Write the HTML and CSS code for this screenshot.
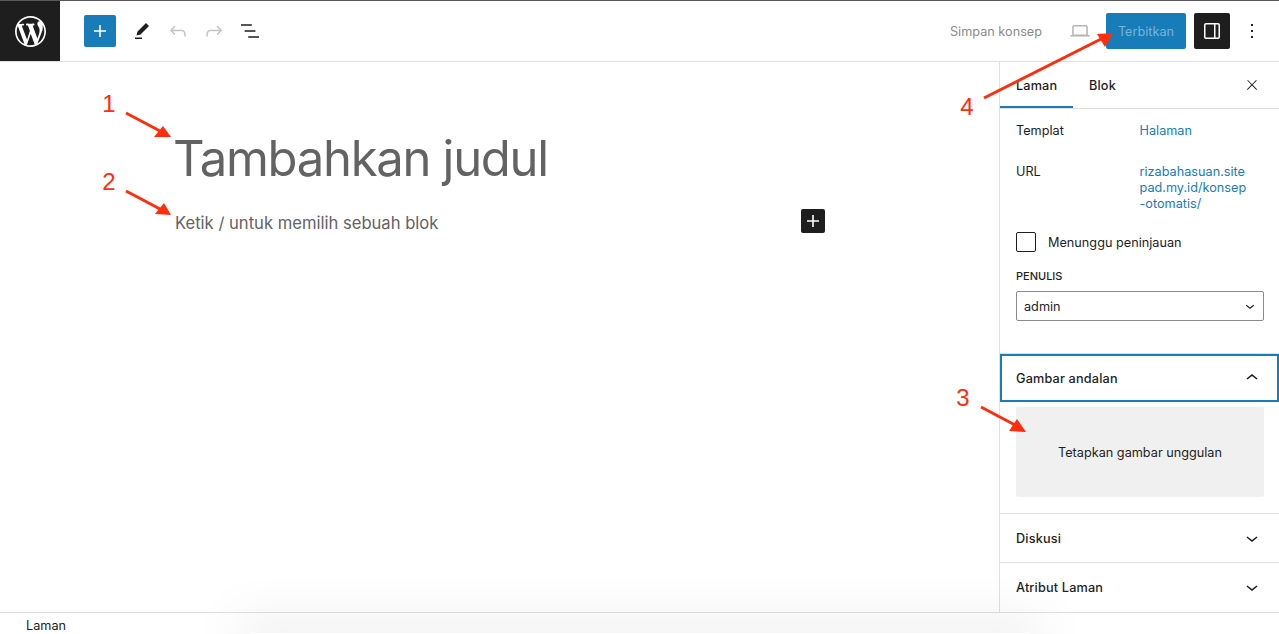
FILE: index.html
```html
<!DOCTYPE html>
<html lang="id">
<head>
    <meta charset="UTF-8">
    <meta name="viewport" content="width=device-width, initial-scale=1.0">
    <title>Tambahkan judul - Editor</title>
    <link rel="stylesheet" href="styles.css">
</head>
<body>
    <div class="wrapper">
        <header class="topbar">
            <a class="logo" href="#">
                <svg viewBox="0 0 20 20" width="31" height="31" fill="#fff"><path d="M20 10c0-5.51-4.49-10-10-10C4.48 0 0 4.49 0 10c0 5.52 4.48 10 10 10 5.51 0 10-4.48 10-10zM7.78 15.37L4.37 6.22c.55-.02 1.17-.08 1.17-.08.5-.06.44-1.13-.06-1.11 0 0-1.45.11-2.37.11-.18 0-.37 0-.58-.01C4.12 2.69 6.87 1.11 10 1.11c2.33 0 4.45.87 6.05 2.34-.68-.11-1.65.39-1.65 1.58 0 .74.45 1.36.9 2.1.35.61.55 1.36.55 2.46 0 1.49-1.4 5-1.4 5l-3.03-8.37c.54-.02.82-.17.82-.17.5-.05.44-1.25-.06-1.22 0 0-1.44.12-2.38.12-.87 0-2.33-.12-2.33-.12-.5-.03-.56 1.2-.06 1.22l.92.08 1.26 3.41zM17.41 10c.24-.64.74-1.87.43-4.25.7 1.29 1.05 2.71 1.05 4.25 0 3.29-1.73 6.24-4.4 7.78.97-2.59 1.94-5.2 2.92-7.78zM6.1 18.09C3.12 16.65 1.11 13.53 1.11 10c0-1.3.23-2.48.72-3.59C3.25 10.3 4.67 14.2 6.1 18.09zm4.03-6.63l2.58 6.98c-.86.29-1.76.45-2.71.45-.79 0-1.57-.11-2.29-.33.81-2.38 1.62-4.74 2.42-7.1z"/></svg>
            </a>
            <div class="tools">
                <button class="inserter">
                    <svg viewBox="0 0 24 24" width="24" height="24" fill="#fff"><path d="M18 11.2h-5.2V6h-1.6v5.2H6v1.6h5.2V18h1.6v-5.2H18z"/></svg>
                </button>
                <button class="tool">
                    <svg viewBox="0 0 24 24" width="24" height="24" fill="#1e1e1e"><path d="m19 7-3-3-8.5 8.5-1 4 4-1L19 7Zm-7 11.5H5V20h7v-1.5Z"/></svg>
                </button>
                <button class="tool">
                    <svg viewBox="0 0 24 24" width="24" height="24" fill="#c4c4c4"><path d="M18.3 11.7c-.6-.6-1.4-.9-2.3-.9H6.7l2.9-3.3-1.1-1-4.5 5L8.5 16l1-1-2.7-2.7H16c.5 0 .9.2 1.3.5 1 1 1 3.4 1 4.5v.3h1.5v-.2c0-1.5 0-4.3-1.5-5.7z"/></svg>
                </button>
                <button class="tool">
                    <svg viewBox="0 0 24 24" width="24" height="24" fill="#c4c4c4"><path d="M15.6 6.5l-1.1 1 2.9 3.3H8c-.9 0-1.7.3-2.3.9-1.4 1.5-1.4 4.2-1.4 5.6v.2h1.5v-.3c0-1.1 0-3.5 1-4.5.3-.3.7-.5 1.3-.5h9.2L14.5 15l1.1 1.1 4.6-4.6-4.6-5z"/></svg>
                </button>
                <button class="tool">
                    <svg viewBox="0 0 24 24" width="24" height="24" fill="#1e1e1e"><path d="M13.8 5.2H3v1.5h10.8V5.2zm-3.6 12v1.5H21v-1.5H10.2zm7.2-6H6.6v1.5h10.8v-1.5z"/></svg>
                </button>
            </div>
            <div class="actions">
                <span class="save-draft">Simpan konsep</span>
                <button class="tool preview">
                    <svg viewBox="0 0 24 24" width="24" height="24" fill="#b5b5b5"><path d="M20.5 16h-.7V8c0-1.1-.9-2-2-2H6.2c-1.1 0-2 .9-2 2v8h-.7c-.8 0-1.5.7-1.5 1.5h20c0-.8-.7-1.5-1.5-1.5zM5.7 8c0-.3.2-.5.5-.5h11.6c.3 0 .5.2.5.5v7.6H5.7V8z"/></svg>
                </button>
                <button class="publish">Terbitkan</button>
                <button class="settings">
                    <svg viewBox="0 0 24 24" width="24" height="24" fill="#fff"><path d="M18 4H6c-1.1 0-2 .9-2 2v12c0 1.1.9 2 2 2h12c1.1 0 2-.9 2-2V6c0-1.1-.9-2-2-2zm-4 14.5H6c-.3 0-.5-.2-.5-.5V6c0-.3.2-.5.5-.5h8v13zm4.5-.5c0 .3-.2.5-.5.5h-2.5v-13H18c.3 0 .5.2.5.5v12z"/></svg>
                </button>
                <button class="tool more">
                    <svg viewBox="0 0 24 24" width="24" height="24" fill="#1e1e1e"><path d="M13 19h-2v-2h2v2zm0-6h-2v-2h2v2zm0-6h-2V5h2v2z"/></svg>
                </button>
            </div>
        </header>

        <div class="body-row">
            <main class="editor">
                <h1 class="post-title">Tambahkan judul</h1>
                <div class="block-row">
                    <p class="placeholder">Ketik / untuk memilih sebuah blok</p>
                    <button class="appender">
                        <svg viewBox="0 0 24 24" width="24" height="24" fill="#fff"><path d="M18 11.2h-5.2V6h-1.6v5.2H6v1.6h5.2V18h1.6v-5.2H18z"/></svg>
                    </button>
                </div>
            </main>

            <aside class="sidebar">
                <div class="tabs">
                    <span class="tab active">Laman</span>
                    <span class="tab">Blok</span>
                    <button class="close">
                        <svg viewBox="0 0 24 24" width="16" height="16" fill="#1e1e1e"><path d="M13 11.8l6.1-6.3-1-1-6.1 6.2-6.1-6.3-1 1 6.1 6.3-6.5 6.7 1 1 6.5-6.6 6.5 6.6 1-1z"/></svg>
                    </button>
                </div>

                <section class="summary">
                    <div class="summary-row">
                        <span class="summary-label">Templat</span>
                        <a class="summary-link" href="#">Halaman</a>
                    </div>
                    <div class="summary-row url-row">
                        <span class="summary-label">URL</span>
                        <a class="summary-link" href="#">rizabahasuan.site<br>pad.my.id/konsep<br>-otomatis/</a>
                    </div>
                    <label class="check-row">
                        <span class="checkbox"></span>
                        <span>Menunggu peninjauan</span>
                    </label>
                    <div class="author-label">Penulis</div>
                    <div class="author-select">
                        <span>admin</span>
                        <svg viewBox="0 0 24 24" width="18" height="18" fill="#1e1e1e"><path d="M17.5 11.6L12 16l-5.5-4.4.9-1.2L12 14l4.5-3.6 1 1.2z"/></svg>
                    </div>
                </section>

                <section class="panel open">
                    <div class="panel-head focused">
                        <span>Gambar andalan</span>
                        <svg viewBox="0 0 24 24" width="24" height="24" fill="#1e1e1e"><path d="M6.5 12.4L12 8l5.5 4.4-.9 1.2L12 10l-4.5 3.6-1-1.2z"/></svg>
                    </div>
                    <div class="panel-body">
                        <button class="featured">Tetapkan gambar unggulan</button>
                    </div>
                </section>
                <section class="panel">
                    <div class="panel-head">
                        <span>Diskusi</span>
                        <svg viewBox="0 0 24 24" width="24" height="24" fill="#1e1e1e"><path d="M17.5 11.6L12 16l-5.5-4.4.9-1.2L12 14l4.5-3.6 1 1.2z"/></svg>
                    </div>
                </section>
                <section class="panel">
                    <div class="panel-head">
                        <span>Atribut Laman</span>
                        <svg viewBox="0 0 24 24" width="24" height="24" fill="#1e1e1e"><path d="M17.5 11.6L12 16l-5.5-4.4.9-1.2L12 14l4.5-3.6 1 1.2z"/></svg>
                    </div>
                </section>
            </aside>
        </div>

        <footer class="statusbar">Laman</footer>
    </div>

    <div class="bottom-shadow"></div>

    <!-- red notes drawn over the screenshot -->
    <svg class="notes" viewBox="0 0 1279 634" width="1279" height="634">
        <g class="note-lines">
            <line x1="126" y1="113" x2="160" y2="131"/>
            <line x1="126" y1="191" x2="160" y2="209"/>
            <line x1="981" y1="407" x2="1015" y2="425"/>
            <line x1="984" y1="98" x2="1103" y2="38"/>
        </g>
        <g class="note-heads">
            <polygon points="171,137 154,137 163,126"/>
            <polygon points="171,215 155,214 164,203"/>
            <polygon points="1026,432 1009,431 1017,419"/>
            <polygon points="1113,33 1097,34 1105,47"/>
        </g>
        <g class="note-text">
            <text x="109" y="112">1</text>
            <text x="109" y="190">2</text>
            <text x="963" y="406">3</text>
            <text x="967" y="115">4</text>
        </g>
    </svg>
</body>
</html>
```

FILE: styles.css
```css
body, html {
    margin: 0;
    padding: 0;
    height: 100%;
    font-family: Inter, "Noto Sans", sans-serif;
    font-size: 12.7px;
    color: #1e1e1e;
    background: #fff;
    overflow: hidden;
}
button {
    font-family: inherit;
    border: none;
    background: none;
    padding: 0;
    display: flex;
    align-items: center;
    justify-content: center;
}
.wrapper {
    display: flex;
    flex-direction: column;
    height: 100vh;
}

/* top bar */
.topbar {
    display: flex;
    align-items: center;
    flex: none;
    height: 60px;
    border-top: 1px solid #5a5a5a;
    border-bottom: 1px solid #e0e0e0;
}
.logo {
    width: 60px;
    height: 60px;
    background: #1e1e1e;
    display: flex;
    align-items: center;
    justify-content: center;
}
.tools {
    display: flex;
    align-items: center;
    margin-left: 24px;
}
.inserter {
    width: 32px;
    height: 32px;
    background: #187cb9;
    border-radius: 2px;
    margin-right: 8px;
}
.tool {
    width: 36px;
    height: 36px;
}
.actions {
    display: flex;
    align-items: center;
    margin-left: auto;
    padding-right: 9px;
}
.save-draft {
    color: #8b8b8b;
    margin-right: 20px;
}
.publish {
    width: 80px;
    height: 36px;
    margin-left: 8px;
    background: #187cb9;
    color: #79b3d8;
    font-size: 12.7px;
    border-radius: 2px;
}
.settings {
    width: 36px;
    height: 36px;
    margin-left: 8px;
    background: #1e1e1e;
    border-radius: 2px;
}
.more {
    margin-left: 4px;
}

/* editor */
.body-row {
    flex: 1;
    display: flex;
    min-height: 0;
}
.editor {
    flex: 1;
    padding: 63px 0 0 175px;
    color: #636363;
}
.post-title {
    margin: 0 0 0 -2px;
    font-size: 49px;
    font-weight: 400;
    line-height: 68px;
    letter-spacing: -1.3px;
    color: #636363;
}
.block-row {
    display: flex;
    align-items: center;
    justify-content: space-between;
    width: 650px;
    margin-top: 14px;
}
.placeholder {
    margin: 0;
    padding-top: 4px;
    font-size: 16.6px;
    line-height: 24px;
}
.appender {
    width: 24px;
    height: 24px;
    background: #1e1e1e;
    border-radius: 2px;
}

/* sidebar */
.sidebar {
    width: 279px;
    flex: none;
    border-left: 1px solid #e0e0e0;
    overflow: hidden;
}
.tabs {
    display: flex;
    align-items: stretch;
    height: 46px;
    border-bottom: 1px solid #e0e0e0;
}
.tab {
    display: flex;
    align-items: center;
    padding: 0 16px;
    font-weight: 500;
    letter-spacing: 0.15px;
    box-sizing: border-box;
}
.tab.active {
    width: 73px;
    box-shadow: inset 0 -2px 0 #187cb9;
}
.close {
    margin-left: auto;
    margin-right: 3px;
    width: 48px;
}
.summary {
    padding: 14px 15px 32px 16px;
}
.summary-row {
    display: flex;
    line-height: 16px;
}
.url-row {
    margin-top: 25px;
}
.summary-label {
    width: 123.5px;
}
.summary-link {
    color: #187cb9;
    text-decoration: none;
}
.check-row {
    display: flex;
    align-items: center;
    gap: 12px;
    margin-top: 20px;
}
.checkbox {
    width: 18px;
    height: 18px;
    border: 1px solid #1e1e1e;
    border-radius: 2px;
}
.author-label {
    margin-top: 17px;
    font-size: 11px;
    line-height: 14px;
    font-weight: 500;
    text-transform: uppercase;
}
.author-select {
    display: flex;
    align-items: center;
    justify-content: space-between;
    height: 28px;
    margin-top: 8px;
    padding: 0 4px 0 7px;
    border: 1px solid #8b8b8b;
    border-radius: 2px;
}
.panel {
    border-top: 1px solid #e0e0e0;
}
.panel-head {
    display: flex;
    align-items: center;
    justify-content: space-between;
    height: 48px;
    padding: 0 15px 0 16px;
    font-weight: 500;
    letter-spacing: 0.17px;
    box-sizing: border-box;
}
.panel-head.focused {
    box-shadow: inset 0 0 0 2px #187cb9;
}
.panel.open {
    padding-bottom: 16px;
}
.panel-body {
    padding: 5px 15px 0 16px;
}
.featured {
    width: 100%;
    height: 90px;
    background: #f0f0f0;
    border-radius: 2px;
    font-size: 12.7px;
    color: #1e1e1e;
}

/* status bar */
.statusbar {
    flex: none;
    height: 21px;
    line-height: 25px;
    padding-left: 26px;
    border-top: 1px solid #e0e0e0;
}

/* soft shadow coming up from the bottom edge */
.bottom-shadow {
    position: absolute;
    left: 250px;
    bottom: 0;
    width: 780px;
    height: 1px;
    box-shadow: 0 0 50px 15px rgba(0, 0, 0, 0.08);
    pointer-events: none;
}

/* notes */
.notes {
    position: absolute;
    left: 0;
    top: 0;
    pointer-events: none;
}
.note-lines line {
    stroke: #ff2d0d;
    stroke-width: 3;
}
.note-heads polygon {
    fill: #ff2d0d;
}
.note-text text {
    fill: #ff2d0d;
    font-family: "Liberation Sans", Arial, sans-serif;
    font-size: 24px;
    text-anchor: middle;
}
```
